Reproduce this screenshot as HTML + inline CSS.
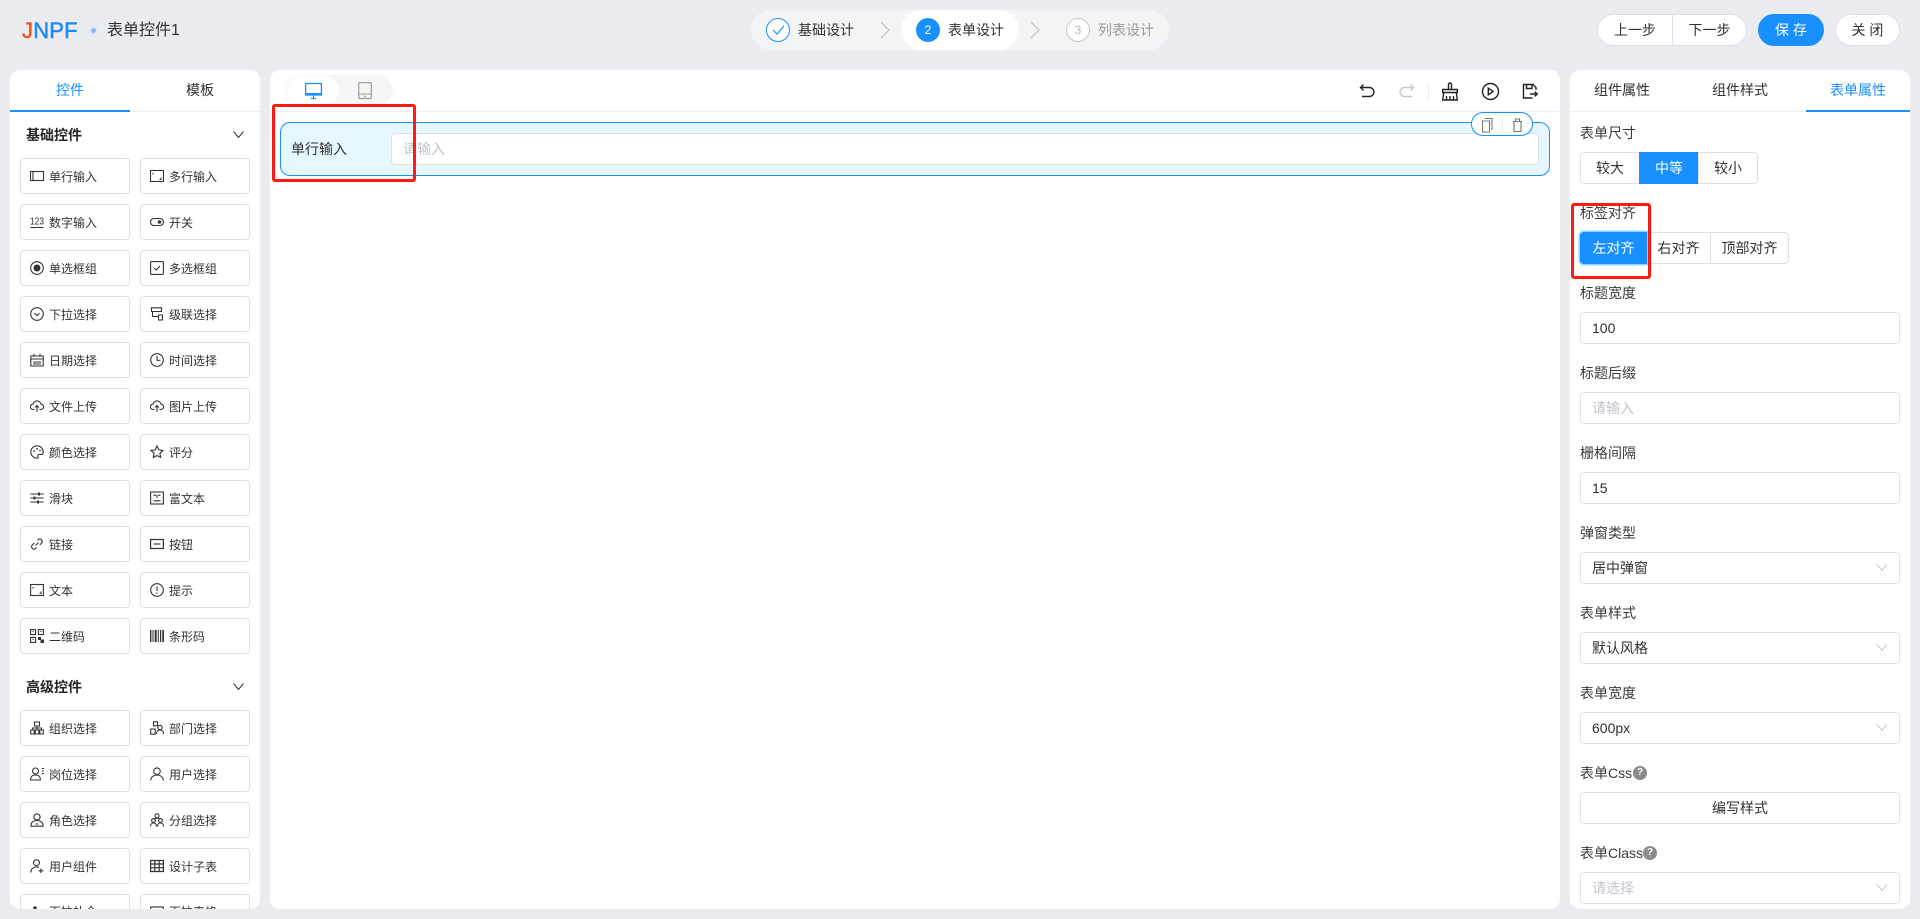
<!DOCTYPE html>
<html lang="zh-CN"><head><meta charset="utf-8"><title>表单控件1</title>
<style>
*{box-sizing:border-box}
html,body{margin:0;padding:0;width:1920px;height:919px;overflow:hidden;background:#ebecf0;font-family:"Liberation Sans","Noto Sans CJK SC",sans-serif;font-size:14px;color:#303133}
.a{position:absolute}
.c{position:absolute;display:flex;align-items:center;justify-content:center;white-space:nowrap}
.panel{position:absolute;top:70px;height:839px;background:#fff;border-radius:10px;overflow:hidden}
.line{position:absolute;height:1px;background:#eeeff2}
.ul{position:absolute;top:110px;height:2px;background:#1890ff}
.head{position:absolute;font-weight:700;font-size:14px;left:26px;line-height:20px;color:#252525}
.grid{position:absolute;left:20px;display:grid;grid-template-columns:110px 110px;grid-auto-rows:36px;gap:10px}
.b{border:1px solid #dcdfe6;border-radius:4px;background:#fff;display:flex;align-items:center;padding-left:9px;font-size:12px;color:#333;white-space:nowrap}
.b svg{width:14px;height:14px;margin-right:5px;flex:none;fill:none;stroke:#333;stroke-width:1.1}
.b svg .f{fill:#333;stroke:none}
.cut{height:15px;overflow:hidden;border-bottom:0;border-radius:4px 4px 0 0;align-items:flex-start;padding-top:10px;line-height:14px}
.lab{position:absolute;left:1580px;line-height:20px;color:#3a3a3a;white-space:nowrap}
.inp{position:absolute;left:1580px;width:320px;height:32px;border:1px solid #dcdfe6;border-radius:4px;background:#fff;padding-left:11px;line-height:30px;color:#303133;white-space:nowrap}
.ph{color:#c0c4cc}
.chev{position:absolute;right:11px;top:10px;width:12px;height:9px;fill:none;stroke:#c0c4cc;stroke-width:1}
.seg{position:absolute;height:32px;border:1px solid #dcdfe6;background:#fff;display:flex;align-items:center;justify-content:center;color:#303133;white-space:nowrap}
.q{display:inline-block;position:absolute;width:14px;height:14px;border-radius:50%;background:#8c8c8c;color:#fff;font-size:10px;line-height:14px;text-align:center;font-weight:700}
.red{position:absolute;border:3px solid #ff1a12;border-radius:3px}
.btn{position:absolute;top:14px;height:32px;background:#fff;border:1px solid #dcdfe6;display:flex;align-items:center;justify-content:center;color:#303133;white-space:nowrap}
.g{fill:none;stroke:#222;stroke-width:1.4}
</style></head><body>

<div class="a" style="left:22px;top:18px;font-size:22px;line-height:25px;letter-spacing:.2px;white-space:nowrap;-webkit-text-stroke:.5px currentColor"><span style="color:#f0541e">J</span><span style="color:#1f8af0">NPF</span></div>
<div class="a" style="left:91px;top:27.500px;width:5px;height:5px;border-radius:50%;background:#8fb8f5;box-shadow:0 0 0 2px #dfe7f6"></div>
<div class="a" style="left:107px;top:20px;font-size:16px;line-height:22px;color:#303133;white-space:nowrap">表单控件1</div>

<div class="a" style="left:751px;top:10px;width:418px;height:40px;border-radius:20px;background:#f3f4f6"></div>
<div class="a" style="left:901px;top:10px;width:118px;height:40px;border-radius:20px;background:#fff"></div>
<svg class="a" style="left:766px;top:18px" width="24" height="24" viewBox="0 0 24 24"><circle cx="12" cy="12" r="11.500" fill="#fff" stroke="#1890ff"/><path d="M7 12l4 4 7-8" fill="none" stroke="#1890ff" stroke-width="1.200"/></svg>
<div class="a" style="left:798px;top:20px;line-height:20px">基础设计</div>
<svg class="a" style="left:880px;top:21px" width="10" height="18" viewBox="0 0 10 18"><path d="M1 1l8 8-8 8" fill="none" stroke="#bfbfbf" stroke-width="1.100"/></svg>
<div class="c" style="left:916px;top:18px;width:24px;height:24px;border-radius:50%;background:#1890ff;color:#fff;font-size:12px">2</div>
<div class="a" style="left:948px;top:20px;line-height:20px">表单设计</div>
<svg class="a" style="left:1030px;top:21px" width="10" height="18" viewBox="0 0 10 18"><path d="M1 1l8 8-8 8" fill="none" stroke="#bfbfbf" stroke-width="1.100"/></svg>
<div class="c" style="left:1066px;top:18px;width:24px;height:24px;border-radius:50%;background:#fff;border:1px solid #c8c8c8;color:#bbb;font-size:12px">3</div>
<div class="a" style="left:1098px;top:20px;line-height:20px;color:#999">列表设计</div>

<div class="btn" style="left:1597px;width:76px;border-radius:16px 0 0 16px">上一步</div>
<div class="btn" style="left:1672px;width:75px;border-radius:0 16px 16px 0">下一步</div>
<div class="btn" style="left:1758px;width:66px;border-radius:16px;background:#1890ff;border-color:#1890ff;color:#fff">保 存</div>
<div class="btn" style="left:1835px;width:65px;border-radius:16px">关 闭</div>

<div class="panel" style="left:10px;width:250px"></div>
<div class="line" style="left:10px;top:111px;width:250px"></div>
<div class="ul" style="left:10px;width:120px"></div>
<div class="c" style="left:10px;top:70px;width:120px;height:40px;color:#1890ff">控件</div>
<div class="c" style="left:140px;top:70px;width:120px;height:40px">模板</div>
<div class="head" style="top:125px">基础控件</div>
<svg class="a" style="left:233px;top:130px" width="11" height="9" viewBox="0 0 11 9"><path d="M.5 1.500l5 6 5-6" fill="none" stroke="#333" stroke-width="1"/></svg>

<div class="grid" style="top:158px">
<div class="b"><svg viewBox="0 0 14 14"><rect x=".5" y="2.500" width="13" height="9"/><path d="M3 2.500v9"/></svg>单行输入</div>
<div class="b"><svg viewBox="0 0 14 14"><rect x=".5" y="1.500" width="13" height="11"/><path d="M3 4v1.500M11 8.500v2H9.500"/></svg>多行输入</div>
<div class="b"><svg viewBox="0 0 14 14"><text x="0" y="9.500" font-size="10.500" textLength="14" lengthAdjust="spacingAndGlyphs" fill="#333" stroke="none" font-family="Liberation Sans">123</text><path d="M.5 12.500h13"/></svg>数字输入</div>
<div class="b"><svg viewBox="0 0 14 14"><rect x=".5" y="3.500" width="13" height="7" rx="3.500"/><circle class="f" cx="9.500" cy="7" r="1.800"/></svg>开关</div>
<div class="b"><svg viewBox="0 0 14 14"><circle cx="7" cy="7" r="6.300"/><circle class="f" cx="7" cy="7" r="3.500"/></svg>单选框组</div>
<div class="b"><svg viewBox="0 0 14 14"><rect x=".6" y=".6" width="12.800" height="12.800" rx="1"/><path d="M4 7l2.200 2L10 5"/></svg>多选框组</div>
<div class="b"><svg viewBox="0 0 14 14"><circle cx="7" cy="7" r="6.300"/><path d="M4.500 6l2.500 2.500L9.500 6"/></svg>下拉选择</div>
<div class="b"><svg viewBox="0 0 14 14"><path d="M1.500.8h10v3.700h-10zM2.500 4.500v5h6M8.500 8h4v5h-4z"/></svg>级联选择</div>
<div class="b"><svg viewBox="0 0 14 14"><path d="M.8 3h12.400v10H.8zM.8 6h12.400M4 .8v3M10 .8v3M3 9h8M3 11h8"/></svg>日期选择</div>
<div class="b"><svg viewBox="0 0 14 14"><circle cx="7" cy="7" r="6.300"/><path d="M7 3v4.300h3.500"/></svg>时间选择</div>
<div class="b"><svg viewBox="0 0 14 14"><path d="M4.500 10.500H3.200A2.700 2.700 0 0 1 3 5.100a4.100 4.100 0 0 1 8 0 2.700 2.700 0 0 1-.2 5.400H9.500M7 12.800V6.500M5 8.500l2-2 2 2"/></svg>文件上传</div>
<div class="b"><svg viewBox="0 0 14 14"><path d="M4.500 10.500H3.200A2.700 2.700 0 0 1 3 5.100a4.100 4.100 0 0 1 8 0 2.700 2.700 0 0 1-.2 5.400H9.500M7 12.800V6.500M5 8.500l2-2 2 2"/></svg>图片上传</div>
<div class="b"><svg viewBox="0 0 14 14"><path d="M7 .8a6.200 6.200 0 1 0 0 12.400c1.200 0 1.500-1 1-1.800-.6-1 .1-2 1.200-2h2c1.200 0 2-.9 2-2.200C13.200 3.400 10.400.8 7 .8z"/><circle class="f" cx="4" cy="6" r=".9"/><circle class="f" cx="7" cy="3.800" r=".9"/><circle class="f" cx="10" cy="5.500" r=".9"/></svg>颜色选择</div>
<div class="b"><svg viewBox="0 0 14 14"><path d="M7 1l1.800 3.900 4.200.5-3.100 2.900.8 4.200L7 10.500l-3.700 2 .8-4.200L1 5.400l4.200-.5z"/></svg>评分</div>
<div class="b"><svg viewBox="0 0 14 14"><path d="M.3 3h13.400M.3 7h13.400M.3 11h13.400"/><rect class="f" x="8" y="1.500" width="2" height="3"/><rect class="f" x="3.500" y="5.500" width="2" height="3"/><rect class="f" x="7" y="9.500" width="2" height="3"/></svg>滑块</div>
<div class="b"><svg viewBox="0 0 14 14"><rect x=".6" y="1" width="12.800" height="12"/><path d="M3.500 4.200h2.500M8 4.200h2.500M7 4v3M3.500 9.800h7"/></svg>富文本</div>
<div class="b"><svg viewBox="0 0 14 14"><path d="M5.500 8.500l3-3M7.500 3.500l1.200-1.200a2.400 2.400 0 0 1 3.200 3.300L9.800 8M6.500 10.500l-1.200 1.200A2.400 2.400 0 0 1 2 8.400L4.200 6"/></svg>链接</div>
<div class="b"><svg viewBox="0 0 14 14"><rect x=".6" y="2.500" width="12.800" height="9" stroke-width="1.200"/><path d="M3.500 7h7"/></svg>按钮</div>
<div class="b"><svg viewBox="0 0 14 14"><rect x=".6" y="1.500" width="12.800" height="11"/><path d="M3 4v1.500M11 8.500v2H9.500"/></svg>文本</div>
<div class="b"><svg viewBox="0 0 14 14"><circle cx="7" cy="7" r="6.300"/><path d="M7 3.300v4.700M7 9.500v1.300"/></svg>提示</div>
<div class="b"><svg viewBox="0 0 14 14"><path d="M.6.600h5v5h-5zM8.400.600h5v5h-5zM.6 8.400h5v5h-5zM2.500 2.500h1.200M10.300 2.500h1.200M2.500 10.300h1.200"/><rect class="f" x="8" y="8" width="3" height="3"/><rect class="f" x="10.500" y="10.500" width="3.500" height="3.500"/></svg>二维码</div>
<div class="b"><svg viewBox="0 0 14 14"><rect class="f" x="0" y="1" width="1.400" height="12"/><rect class="f" x="2.500" y="1" width="1" height="12"/><rect class="f" x="4.700" y="1" width="2" height="12"/><rect class="f" x="7.800" y="1" width="1" height="12"/><rect class="f" x="10" y="1" width="1.200" height="12"/><rect class="f" x="12.300" y="1" width="1.700" height="12"/></svg>条形码</div>
</div>
<div class="head" style="top:677px">高级控件</div>
<svg class="a" style="left:233px;top:682px" width="11" height="9" viewBox="0 0 11 9"><path d="M.5 1.500l5 6 5-6" fill="none" stroke="#333" stroke-width="1"/></svg>
<div class="grid" style="top:710px">
<div class="b"><svg viewBox="0 0 14 14"><path d="M4.500 1h5v4h-5zM.7 9h3.500v4H.7zM5.300 9h3.500v4H5.300zM9.800 9h3.500v4H9.800zM2.500 9V7h9v2M7 5v4"/></svg>组织选择</div>
<div class="b"><svg viewBox="0 0 14 14"><path d="M3.500.8h4v4h-4zM.7 8h4.500v5.200H.7z"/><circle cx="10" cy="6.500" r="2.200"/><path d="M6.500 13c0-2.500 1.500-4 3.500-4s3.500 1.500 3.500 4"/></svg>部门选择</div>
<div class="b"><svg viewBox="0 0 14 14"><circle cx="5.500" cy="4" r="3"/><path d="M.7 13v-1c0-2.500 2-4 4.800-4s4.800 1.500 4.800 4v1zM11.800 1.500H14M11.800 4H14M11.800 6.500H14"/></svg>岗位选择</div>
<div class="b"><svg viewBox="0 0 14 14"><circle cx="7" cy="4.200" r="3.300"/><path d="M.7 13.500c0-3 2.500-5.500 6.300-5.500s6.300 2.500 6.300 5.500"/></svg>用户选择</div>
<div class="b"><svg viewBox="0 0 14 14"><circle cx="7" cy="4" r="3.100"/><path d="M1 13.200v-1C1 9.500 3.500 7.500 7 7.500s6 2 6 4.700v1zM5.500 11h3"/></svg>角色选择</div>
<div class="b"><svg viewBox="0 0 14 14"><circle cx="7" cy="2.800" r="2"/><circle cx="3.500" cy="7.500" r="1.900"/><circle cx="10.500" cy="7.500" r="1.900"/><path d="M.5 13.500c0-2 1.200-3.500 3-3.500s3 1.500 3 3.500M7.500 13.500c0-2 1.200-3.500 3-3.500s3 1.500 3 3.500M4.800 6.500C5 5.500 6 5 7 5s2 .5 2.200 1.500"/></svg>分组选择</div>
<div class="b"><svg viewBox="0 0 14 14"><circle cx="6.500" cy="3.800" r="3"/><path d="M.7 13.500c0-3 2.300-5.500 5.800-5.500 1 0 1.800.2 2.500.5M10.800 9.500v4.500M8.500 11.800H13.500"/></svg>用户组件</div>
<div class="b"><svg viewBox="0 0 14 14"><path d="M.6 1.500h12.800v11H.6zM.6 5h12.800M.6 8.700h12.800M4.800 1.500v11M9.200 1.500v11" stroke-width="1.200"/></svg>设计子表</div>
</div>
<div class="grid" style="top:894px;grid-auto-rows:15px">
<div class="b cut"><svg viewBox="0 0 14 14"><circle class="f" cx="5" cy="3" r="1.800"/></svg>下拉补全</div>
<div class="b cut"><svg viewBox="0 0 14 14" style="stroke:#666;stroke-width:1.400"><path d="M.7 2h12.600v11H.7zM.7 5h12.600"/></svg>下拉表格</div>
</div>

<div class="panel" style="left:270px;width:1290px"></div>
<div class="a" style="left:286px;top:75px;width:107px;height:30px;border-radius:15px;background:#f5f6f8"></div>
<div class="a" style="left:287px;top:76px;width:52px;height:28px;border-radius:14px;background:#fff"></div>
<svg class="a" style="left:304px;top:82px" width="20" height="18" viewBox="0 0 20 18"><rect x="1.600" y="1.500" width="15.800" height="11.500" fill="none" stroke="#1890ff" stroke-width="1.300"/><rect x="1.500" y="11" width="16" height="2.500" fill="#1890ff"/><path d="M7 16.500h5" stroke="#1890ff" stroke-width="1.300"/><path d="M9.500 13v3" stroke="#1890ff"/></svg>
<svg class="a" style="left:357px;top:81px" width="16" height="19" viewBox="0 0 16 19"><rect x="1.700" y="1.700" width="12.600" height="15.800" rx="1" fill="#f7f5f0" stroke="#9a9a9a" stroke-width="1.200"/><path d="M1.700 13h12.600" stroke="#9a9a9a"/><circle cx="8" cy="15.300" r=".8" fill="#888"/></svg>
<div class="line" style="left:270px;top:111px;width:1290px"></div>

<svg class="a" style="left:0;top:0" width="1920" height="119" viewBox="0 0 1920 119">
<path class="g" d="M1363.500 84.500l-3 3 3 3M1360.500 87.500h9a4.500 4.500 0 0 1 0 9h-7.500"/>
<path d="M1410.500 84.500l3 3-3 3M1413.500 87.500h-9a4.500 4.500 0 0 0 0 9h7.500" fill="none" stroke="#c9c9c9" stroke-width="1.400"/>
<path d="M1428.500 84v16" stroke="#ececec"/>
<path class="g" d="M1448.500 89.500v-5a1.500 1.500 0 0 1 3 0v5M1442.700 89.500h14.600v3h-14.600zM1443.700 92.500l-1 7.500h14.600l-1-7.500M1446.500 96v4M1450 96v4M1453.500 96v4"/>
<circle class="g" cx="1490.500" cy="91.500" r="8"/><path class="g" d="M1488.300 88.200v6.600l4.800-3.300z"/>
<path class="g" d="M1536 90v-2.500l-3-3h-9.500v13.500h9M1526.500 84.500v4h5.500v-4M1530 94h7M1534.700 91.700l2.500 2.300-2.500 2.300"/>
</svg>

<div class="a" style="left:280px;top:122px;width:1270px;height:54px;background:#e6f7ff;border:1px solid #1890ff;border-radius:10px"></div>
<div class="a" style="left:291px;top:139px;line-height:20px;color:#303133">单行输入</div>
<div class="a" style="left:391px;top:133px;width:1148px;height:32px;background:#fff;border:1px solid #dcdfe6;border-radius:4px;padding-left:11px;line-height:30px;color:#c0c4cc">请输入</div>
<div class="a" style="left:1471px;top:112px;width:62px;height:24px;background:#fff;border:1px solid #1890ff;border-radius:12px"></div>
<svg class="a" style="left:1480px;top:116px" width="48" height="18" viewBox="0 0 48 18"><path d="M4.500 2.500h7.500v11.500M2.500 5h7v11h-7z" fill="none" stroke="#777" stroke-width="1.100"/><path d="M22.500 1v15" stroke="#ececec"/><path d="M33 5.500h9M34 5.500v10h7v-10M35.500 5.500v-2.500h4v2.500" fill="none" stroke="#777" stroke-width="1.100"/></svg>
<div class="red" style="left:272px;top:104px;width:144px;height:78px"></div>

<div class="panel" style="left:1570px;width:340px"></div>
<div class="line" style="left:1570px;top:111px;width:340px"></div>
<div class="ul" style="left:1806px;width:104px"></div>
<div class="c" style="left:1570px;top:70px;width:104px;height:40px">组件属性</div>
<div class="c" style="left:1688px;top:70px;width:104px;height:40px">组件样式</div>
<div class="c" style="left:1806px;top:70px;width:104px;height:40px;color:#1890ff">表单属性</div>

<div class="lab" style="top:123px">表单尺寸</div>
<div class="seg" style="left:1580px;top:152px;width:60px;border-radius:4px 0 0 4px">较大</div>
<div class="seg" style="left:1639px;top:152px;width:60px;background:#1890ff;border-color:#1890ff;color:#fff">中等</div>
<div class="seg" style="left:1698px;top:152px;width:60px;border-radius:0 4px 4px 0">较小</div>

<div class="lab" style="top:203px">标签对齐</div>
<div class="seg" style="left:1646px;top:232px;width:65px">右对齐</div>
<div class="seg" style="left:1710px;top:232px;width:79px;border-radius:0 4px 4px 0">顶部对齐</div>
<div class="seg" style="left:1580px;top:232px;width:67px;background:#1890ff;border-color:#1890ff;color:#fff;border-radius:4px 0 0 4px;box-shadow:0 0 0 1.500px #91d5ff">左对齐</div>
<div class="red" style="left:1571px;top:203px;width:80px;height:76px"></div>

<div class="lab" style="top:283px">标题宽度</div>
<div class="inp" style="top:312px">100</div>
<div class="lab" style="top:363px">标题后缀</div>
<div class="inp ph" style="top:392px;color:#c0c4cc">请输入</div>
<div class="lab" style="top:443px">栅格间隔</div>
<div class="inp" style="top:472px">15</div>
<div class="lab" style="top:523px">弹窗类型</div>
<div class="inp" style="top:552px">居中弹窗<svg class="chev" viewBox="0 0 12 9"><path d="M1 1.500l5 6 5-6"/></svg></div>
<div class="lab" style="top:603px">表单样式</div>
<div class="inp" style="top:632px">默认风格<svg class="chev" viewBox="0 0 12 9"><path d="M1 1.500l5 6 5-6"/></svg></div>
<div class="lab" style="top:683px">表单宽度</div>
<div class="inp" style="top:712px">600px<svg class="chev" viewBox="0 0 12 9"><path d="M1 1.500l5 6 5-6"/></svg></div>
<div class="lab" style="top:763px">表单Css</div><span class="q" style="left:1633px;top:766px">?</span>
<div class="seg" style="left:1580px;top:792px;width:320px;border-radius:4px">编写样式</div>
<div class="lab" style="top:843px">表单Class</div><span class="q" style="left:1643px;top:846px">?</span>
<div class="inp" style="top:872px;color:#c0c4cc">请选择<svg class="chev" viewBox="0 0 12 9"><path d="M1 1.500l5 6 5-6"/></svg></div>

</body></html>
